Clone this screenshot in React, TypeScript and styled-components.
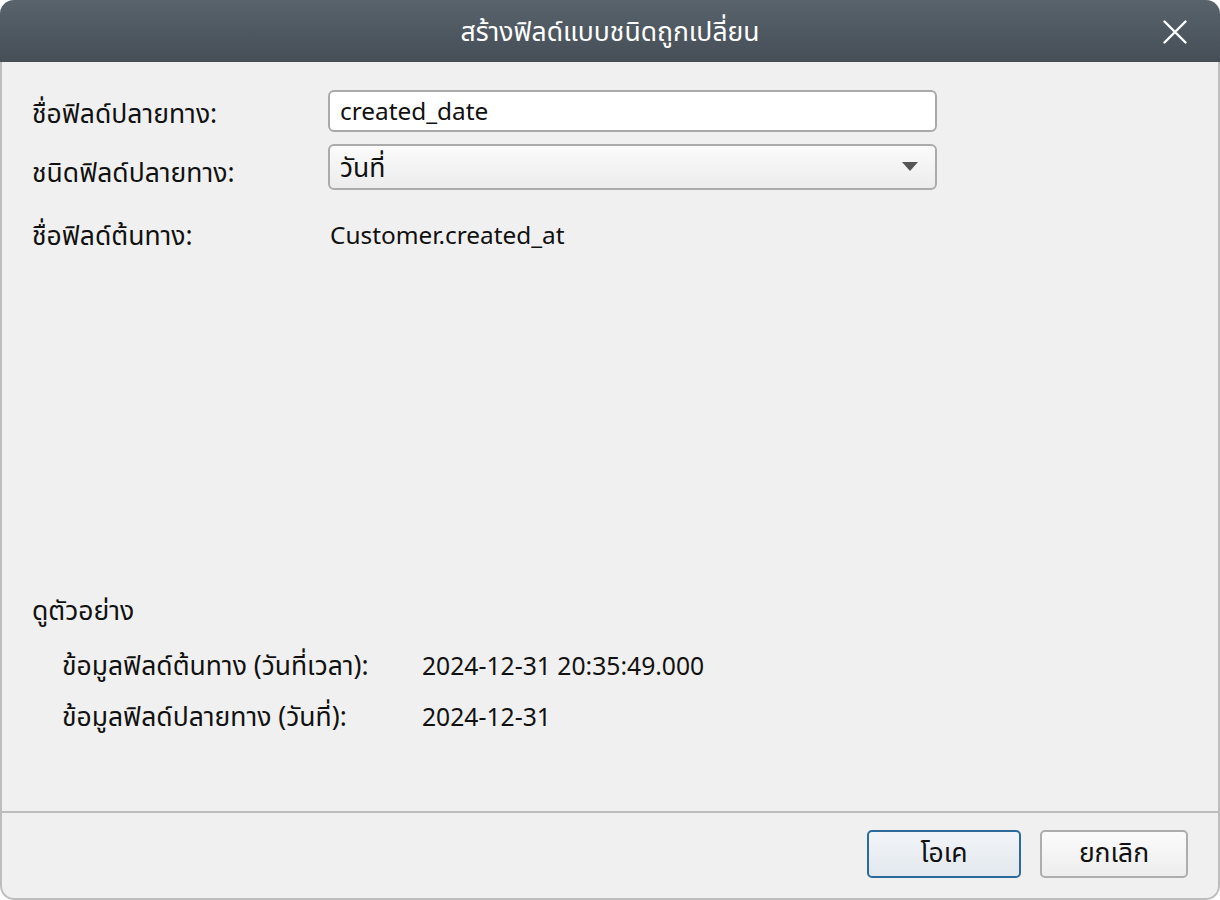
import React from "react";
import styled, { createGlobalStyle } from "styled-components";

const Global = createGlobalStyle`
  html, body { margin: 0; padding: 0; background: #ffffff; }
  body { font-family: "Noto Sans", "Noto Sans Thai", "Open Sans", sans-serif; }
  * { box-sizing: border-box; }
`;

const Window = styled.div`
  width: 1220px;
  height: 900px;
  display: flex;
  flex-direction: column;
  border-radius: 14px;
  overflow: hidden;
  background: #f0f0f0;
`;

const TitleBar = styled.div`
  height: 62px;
  flex: none;
  position: relative;
  display: flex;
  align-items: center;
  justify-content: center;
  padding-top: 3px;
  background: linear-gradient(#58636c, #464e56);
  color: #ffffff;
  font-size: 26.5px;
`;

const CloseButton = styled.button`
  position: absolute;
  right: 33px;
  top: 20px;
  width: 24px;
  height: 24px;
  padding: 0;
  border: none;
  background: transparent;
  display: flex;
  align-items: center;
  justify-content: center;
`;

const Body = styled.div`
  flex: 1;
  display: flex;
  flex-direction: column;
  border: 2px solid #bdbdbd;
  border-top: none;
  border-radius: 0 0 14px 14px;
`;

const Main = styled.div`
  flex: 1;
  display: flex;
  flex-direction: column;
  padding: 28px 0 0 30px;
  color: #111;
  font-size: 26.5px;
`;

const FormGrid = styled.div`
  display: grid;
  grid-template-columns: 296px 609px;
  row-gap: 12px;
  align-items: center;
`;

const Label = styled.div<{ $offset?: number }>`
  line-height: 36px;
  margin-top: ${(p) => p.$offset ?? 0}px;
`;

const Latin = styled.span<{ $size?: number }>`
  font-size: ${(p) => p.$size ?? 24.4}px;
`;

const TextInput = styled.div`
  height: 42px;
  border: 2px solid #a9a9a9;
  border-radius: 6px;
  background: #ffffff;
  padding: 0 10px 1px;
  display: flex;
  align-items: center;
`;

const Select = styled.div`
  height: 46px;
  border: 2px solid #ababab;
  border-radius: 6px;
  background: linear-gradient(#fbfbfb, #ececec);
  padding: 3px 17px 0 10px;
  display: flex;
  align-items: center;
  justify-content: space-between;
`;

const Arrow = styled.svg`
  margin-top: -3px;
`;

const Value = styled.div`
  padding-left: 2px;
  line-height: 36px;
  margin-top: 14px;
`;

const Spacer = styled.div`
  flex: 1;
`;

const Preview = styled.div`
  display: flex;
  flex-direction: column;
  padding-bottom: 76px;
`;

const PreviewTitle = styled.div`
  line-height: 36px;
  margin-bottom: 19px;
`;

const PreviewGrid = styled.div`
  display: grid;
  grid-template-columns: 360px auto;
  row-gap: 14px;
  padding-left: 30px;
  line-height: 36px;
`;

const Footer = styled.div`
  height: 87px;
  flex: none;
  border-top: 2px solid #bdbdbd;
  display: flex;
  justify-content: flex-end;
  align-items: flex-start;
  gap: 19px;
  padding: 17px 30px 0 0;
`;

const Button = styled.button<{ $primary?: boolean; $w: number }>`
  width: ${(p) => p.$w}px;
  height: 48px;
  border-radius: 5px;
  border: 2px solid ${(p) => (p.$primary ? "#2b6b9c" : "#adadad")};
  background: ${(p) =>
    p.$primary
      ? "linear-gradient(#f2f5f8, #e2e8ee)"
      : "linear-gradient(#fbfbfb, #ededed)"};
  font-family: inherit;
  font-size: 26.5px;
  color: #111;
  padding: 0;
`;

export default function App() {
  return (
    <>
      <Global />
      <Window>
        <TitleBar>
          สร้างฟิลด์แบบชนิดถูกเปลี่ยน
          <CloseButton aria-label="close">
            <svg width="24" height="24" viewBox="0 0 24 24">
              <path d="M1.5 1.5L22.5 22.5M22.5 1.5L1.5 22.5" stroke="#fff" strokeWidth="2.4" strokeLinecap="round" />
            </svg>
          </CloseButton>
        </TitleBar>
        <Body>
          <Main>
            <FormGrid>
              <Label $offset={4}>ชื่อฟิลด์ปลายทาง:</Label>
              <TextInput>
                <Latin>created_date</Latin>
              </TextInput>
              <Label $offset={10}>ชนิดฟิลด์ปลายทาง:</Label>
              <Select>
                <span>วันที่</span>
                <Arrow width="16" height="10" viewBox="0 0 16 10">
                  <path d="M0 0H16L8 9Z" fill="#555" />
                </Arrow>
              </Select>
              <Label $offset={14}>ชื่อฟิลด์ต้นทาง:</Label>
              <Value>
                <Latin>Customer.created_at</Latin>
              </Value>
            </FormGrid>
            <Spacer />
            <Preview>
              <PreviewTitle>ดูตัวอย่าง</PreviewTitle>
              <PreviewGrid>
                <div>ข้อมูลฟิลด์ต้นทาง (วันที่เวลา):</div>
                <div>
                  <Latin $size={24.7}>2024-12-31 20:35:49.000</Latin>
                </div>
                <div>ข้อมูลฟิลด์ปลายทาง (วันที่):</div>
                <div>
                  <Latin $size={24.7}>2024-12-31</Latin>
                </div>
              </PreviewGrid>
            </Preview>
          </Main>
          <Footer>
            <Button $primary $w={154}>โอเค</Button>
            <Button $w={148}>ยกเลิก</Button>
          </Footer>
        </Body>
      </Window>
    </>
  );
}
